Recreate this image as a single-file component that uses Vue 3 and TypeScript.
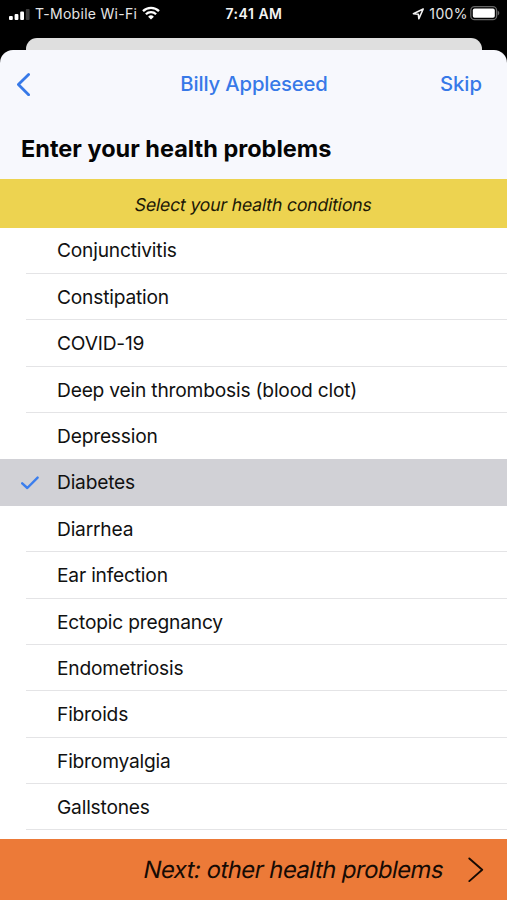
<script setup lang="ts">
import { ref } from 'vue'

interface Condition {
  name: string
  selected: boolean
}

const conditions = ref<Condition[]>([
  { name: 'Conjunctivitis', selected: false },
  { name: 'Constipation', selected: false },
  { name: 'COVID-19', selected: false },
  { name: 'Deep vein thrombosis (blood clot)', selected: false },
  { name: 'Depression', selected: false },
  { name: 'Diabetes', selected: true },
  { name: 'Diarrhea', selected: false },
  { name: 'Ear infection', selected: false },
  { name: 'Ectopic pregnancy', selected: false },
  { name: 'Endometriosis', selected: false },
  { name: 'Fibroids', selected: false },
  { name: 'Fibromyalgia', selected: false },
  { name: 'Gallstones', selected: false },
])

function toggle(condition: Condition) {
  condition.selected = !condition.selected
}
</script>

<template>
  <div class="screen">
    <div class="status">
      <div class="carrier">
        <svg class="signal" width="21" height="11" viewBox="0 0 21 11">
          <rect x="0" y="7" width="3.8" height="4" rx="1" fill="#fff" />
          <rect x="5.6" y="5" width="3.8" height="6" rx="1" fill="#fff" />
          <rect x="11.2" y="2.4" width="3.8" height="8.6" rx="1" fill="#fff" />
          <rect x="16.8" y="0" width="3.8" height="11" rx="1" fill="#3c3c3c" />
        </svg>
        <span class="carrier-name">T-Mobile Wi-Fi</span>
        <svg class="wifi" width="18" height="14" viewBox="0 0 18 14">
          <g fill="none" stroke="#fff" stroke-width="2.3">
            <path d="M1 5.1a11.3 11.3 0 0 1 16 0" />
            <path d="M3.9 8.2a7.2 7.2 0 0 1 10.2 0" />
          </g>
          <path d="M9 13.6 6.1 10.7a4.1 4.1 0 0 1 5.8 0z" fill="#fff" />
        </svg>
      </div>
      <span class="time">7:41 AM</span>
      <div class="power">
        <svg class="location" width="13" height="12" viewBox="0 0 13 12">
          <path d="M11.2 1 1.4 5.7l4.9.5.6 4.6z" fill="none" stroke="#f2f2f2" stroke-width="1.6" stroke-linejoin="round" />
        </svg>
        <span class="percent">100%</span>
        <svg class="battery" width="30" height="15" viewBox="0 0 30 15">
          <rect x=".8" y=".7" width="25.8" height="13" rx="3.8" fill="none" stroke="#666" stroke-width="1.3" />
          <rect x="2.8" y="2.6" width="22" height="9.2" rx="1.8" fill="#fff" />
          <path d="M27.7 4.8c2.1.6 2.1 4 0 4.6z" fill="#666" />
        </svg>
      </div>
    </div>
    <div class="back-card"></div>
    <main class="sheet">
      <nav class="nav">
        <svg class="back" width="15" height="24" viewBox="0 0 15 24">
          <path d="M12.6 2.4 2.4 12.6l10.2 10.1" fill="none" stroke="#3779e8" stroke-width="2.8" stroke-linecap="round" stroke-linejoin="round" />
        </svg>
        <span class="patient">Billy Appleseed</span>
        <span class="skip">Skip</span>
      </nav>
      <h1 class="title"><span>Enter your health problems</span></h1>
      <div class="hint"><span class="slanted">Select your health conditions</span></div>
      <ul class="list">
        <li
          v-for="condition in conditions"
          :key="condition.name"
          class="row"
          :class="{ selected: condition.selected }"
          @click="toggle(condition)"
        >
          <span class="mark">
            <svg v-if="condition.selected" width="19" height="14" viewBox="0 0 19 14">
              <path d="M1.2 7.3 6.3 12 16.6 1.6" fill="none" stroke="#3b7eed" stroke-width="2.4" stroke-linecap="round" stroke-linejoin="round" />
            </svg>
          </span>
          <span class="name">{{ condition.name }}</span>
        </li>
      </ul>
      <footer class="next">
        <span class="next-label slanted">Next: other health problems</span>
        <svg width="16" height="26" viewBox="0 0 16 26">
          <path d="M1.3 1.5 14.2 12.8 1.3 24.1" fill="none" stroke="#160b04" stroke-width="1.9" stroke-linecap="round" stroke-linejoin="round" />
        </svg>
      </footer>
    </main>
  </div>
</template>

<style>
body {
  margin: 0;
  background: #000;
}
</style>

<style scoped>
.screen {
  width: 507px;
  height: 900px;
  display: flex;
  flex-direction: column;
  overflow: hidden;
  background: #000;
  font-family: Inter, 'Liberation Sans', sans-serif;
  color: #111;
  white-space: nowrap;
}
.status {
  height: 38px;
  flex: none;
  display: grid;
  grid-template-columns: 1fr auto 1fr;
  box-sizing: border-box;
  padding: 0 6px 11px 9px;
  align-items: center;
  color: #e6e6e6;
  font-size: 14px;
}
.carrier,
.power {
  display: flex;
  align-items: center;
}
.signal {
  margin-top: 1px;
}
.carrier-name {
  margin-left: 5px;
  letter-spacing: 0.28px;
}
.wifi {
  margin-left: 5px;
  margin-top: -2px;
}
.time {
  font-weight: 600;
  letter-spacing: 0.5px;
  color: #f4f4f4;
  transform: translateX(-1px);
}
.power {
  justify-content: flex-end;
}
.percent {
  margin-left: 4px;
  letter-spacing: 0.4px;
}
.battery {
  margin-left: 2px;
  margin-right: 1px;
  margin-top: -1px;
}
.back-card {
  height: 12px;
  flex: none;
  margin: 0 25px 0 26px;
  border-radius: 11px 11px 0 0;
  background: #dfdfdf;
}
.sheet {
  flex: 1;
  min-height: 0;
  display: flex;
  flex-direction: column;
  overflow: hidden;
  border-radius: 13px 13px 0 0;
  background: #f7f8fd;
}
.nav {
  height: 67px;
  flex: none;
  display: grid;
  grid-template-columns: 1fr auto 1fr;
  align-items: center;
  padding: 0 25px 0 16px;
  color: #3779e8;
  font-size: 20.3px;
  font-weight: 550;
}
.patient {
  letter-spacing: -0.15px;
  transform: translateX(5px);
}
.skip {
  justify-self: end;
}
.title {
  height: 62px;
  flex: none;
  margin: 0;
  padding-left: 21px;
  font-size: 23.5px;
  line-height: 64px;
  font-weight: 700;
  color: #050505;
}
.hint {
  height: 49px;
  flex: none;
  background: #edd350;
  line-height: 51px;
  text-align: center;
  font-size: 17.7px;
  letter-spacing: -0.2px;
  color: #1c1806;
}
.slanted {
  display: inline-block;
  transform: skewX(-11deg);
}
.list {
  flex: 1;
  min-height: 0;
  margin: 0;
  padding: 0;
  overflow: hidden;
  list-style: none;
  background: #fff;
}
.row {
  height: 46.4px;
  display: flex;
}
.row:first-child {
  margin-top: -0.6px;
}
.mark {
  width: 26px;
  flex: none;
  display: flex;
  align-items: center;
}
.mark svg {
  flex: none;
  margin-left: 21px;
}
.name {
  flex: 1;
  box-sizing: border-box;
  padding-left: 31px;
  border-bottom: 1px solid #e4e4e6;
  line-height: 46.4px;
  font-size: 19.2px;
  letter-spacing: -0.2px;
}
.row.selected {
  background: #d1d1d6;
}
.row.selected .name,
.row:has(+ .selected) .name {
  border-color: transparent;
}
.next {
  height: 61px;
  flex: none;
  display: flex;
  align-items: center;
  justify-content: flex-end;
  gap: 25px;
  padding-right: 23px;
  background: #ec7a38;
  color: #160b04;
  font-size: 23.8px;
  letter-spacing: -0.5px;
}
</style>
